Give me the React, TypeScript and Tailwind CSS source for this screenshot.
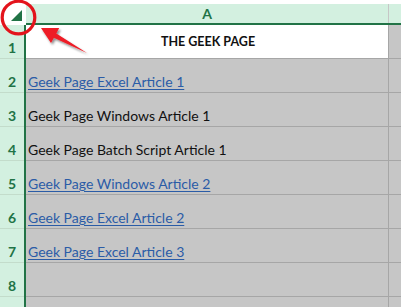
import React from "react";

type Row = { n: string; text: string; link: boolean; header?: boolean };

const rows: Row[] = [
  { n: "1", text: "THE GEEK PAGE", link: false, header: true },
  { n: "2", text: "Geek Page Excel Article 1", link: true },
  { n: "3", text: "Geek Page Windows Article 1", link: false },
  { n: "4", text: "Geek Page Batch Script Article 1", link: false },
  { n: "5", text: "Geek Page Windows Article 2", link: true },
  { n: "6", text: "Geek Page Excel Article 2", link: true },
  { n: "7", text: "Geek Page Excel Article 3", link: true },
  { n: "8", text: "", link: false },
  { n: "", text: "", link: false },
];

export default function App() {
  return (
    <div className="relative w-[401px] h-[307px] overflow-hidden bg-white font-['Lato','Liberation_Sans',sans-serif]">
      {/* column header */}
      <div className="flex h-[25px]">
        <div className="w-[26px] bg-white relative">
          <svg className="absolute left-0 top-0" width="26" height="25" viewBox="0 0 26 25">
            <polygon points="11,21 22,21 22,10" fill="#217346" />
          </svg>
        </div>
        <div className="flex-1 flex flex-col">
          <div className="h-[4px] bg-white" />
          <div className="flex h-[19px] bg-[#d3f0e0]">
            <div className="w-[362px] flex items-center justify-center text-[#217346] font-bold text-[14px] leading-none pt-[1px]">
              A
            </div>
            <div className="w-[1px] bg-[#c6c6c6]" />
            <div className="flex-1" />
          </div>
          <div className="h-[2px] bg-[#217346]" />
        </div>
      </div>

      {/* body */}
      <div className="flex">
        <div className="w-[24px] bg-[#d3f0e0] flex flex-col">
          {rows.map((r, i) => (
            <div
              key={i}
              className="h-[34px] shrink-0 border-b border-[#c3dccb] flex justify-center items-end pb-[3px] text-[#217346] font-bold text-[14px] leading-none"
            >
              {r.n}
            </div>
          ))}
        </div>
        <div className="w-[2px] bg-[#217346]" />
        <div className="flex-1 flex flex-col">
          {rows.map((r, i) => (
            <div key={i} className="h-[34px] shrink-0 flex border-b border-[#a6a6a6]">
              <div
                className={`w-[362px] flex pl-[2px] leading-none ${
                  r.header
                    ? "bg-white items-center justify-center font-bold text-[12.5px] text-[#111] pt-[1px]"
                    : "bg-[#c6c6c6] items-end pb-[3px] text-[14px]"
                } ${r.link ? "text-[#2b5ca6] underline underline-offset-[2px]" : "text-[#111]"}`}
              >
                {r.text}
              </div>
              <div className="w-[1px] bg-[#a6a6a6]" />
              <div className="flex-1 bg-[#c6c6c6]" />
            </div>
          ))}
        </div>
      </div>

      {/* annotations */}
      <svg className="absolute left-0 top-0 pointer-events-none" width="401" height="307" viewBox="0 0 401 307">
        <defs>
          <filter id="sh" x="-20%" y="-20%" width="150%" height="150%">
            <feDropShadow dx="1.5" dy="2" stdDeviation="1" floodColor="#000" floodOpacity="0.45" />
          </filter>
        </defs>
        <circle cx="18.5" cy="17.5" r="16.3" fill="none" stroke="#e3141c" strokeWidth="3.2" />
        <polygon
          points="41,28 59.2,28.1 56.3,33.4 87,53 53.9,37.8 51,43.1"
          fill="#ee1c25"
          filter="url(#sh)"
        />
      </svg>
    </div>
  );
}
